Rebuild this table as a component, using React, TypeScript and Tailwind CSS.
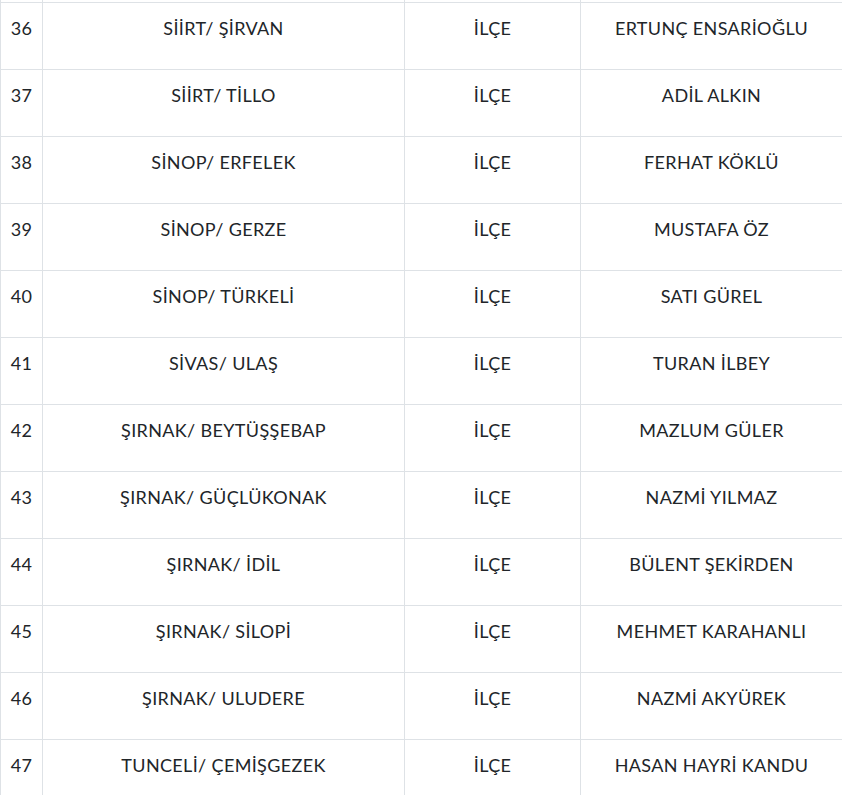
const rows = [
  ["36", "SİİRT/ ŞİRVAN", "ERTUNÇ ENSARİOĞLU"],
  ["37", "SİİRT/ TİLLO", "ADİL ALKIN"],
  ["38", "SİNOP/ ERFELEK", "FERHAT KÖKLÜ"],
  ["39", "SİNOP/ GERZE", "MUSTAFA ÖZ"],
  ["40", "SİNOP/ TÜRKELİ", "SATI GÜREL"],
  ["41", "SİVAS/ ULAŞ", "TURAN İLBEY"],
  ["42", "ŞIRNAK/ BEYTÜŞŞEBAP", "MAZLUM GÜLER"],
  ["43", "ŞIRNAK/ GÜÇLÜKONAK", "NAZMİ YILMAZ"],
  ["44", "ŞIRNAK/ İDİL", "BÜLENT ŞEKİRDEN"],
  ["45", "ŞIRNAK/ SİLOPİ", "MEHMET KARAHANLI"],
  ["46", "ŞIRNAK/ ULUDERE", "NAZMİ AKYÜREK"],
  ["47", "TUNCELİ/ ÇEMİŞGEZEK", "HASAN HAYRİ KANDU"],
];

const cell = "border border-[#dee2e6] px-3 pt-3 pb-[27px] text-center align-top";

const App = () => {
  return (
    <div className="h-[795px] w-[842px] overflow-hidden bg-white font-['Lato','Liberation_Sans',sans-serif] text-[18px] leading-[27px] tracking-[0.35px] text-[#212529]">
      <table className="-mt-[65px] w-[842px] table-fixed border-collapse">
        <colgroup>
          <col className="w-[42px]" />
          <col className="w-[362px]" />
          <col className="w-[176px]" />
          <col className="w-[262px]" />
        </colgroup>
        <tbody>
          <tr>
            <td className={cell}>&nbsp;</td>
            <td className={cell}></td>
            <td className={cell}></td>
            <td className={cell}></td>
          </tr>
          {rows.map(([no, place, name]) => (
            <tr key={no}>
              <td className="border border-[#dee2e6] px-1 pt-3 pb-[27px] text-center align-top">{no}</td>
              <td className={cell}>{place}</td>
              <td className={cell}>İLÇE</td>
              <td className={cell}>{name}</td>
            </tr>
          ))}
        </tbody>
      </table>
    </div>
  );
};

export default App;
